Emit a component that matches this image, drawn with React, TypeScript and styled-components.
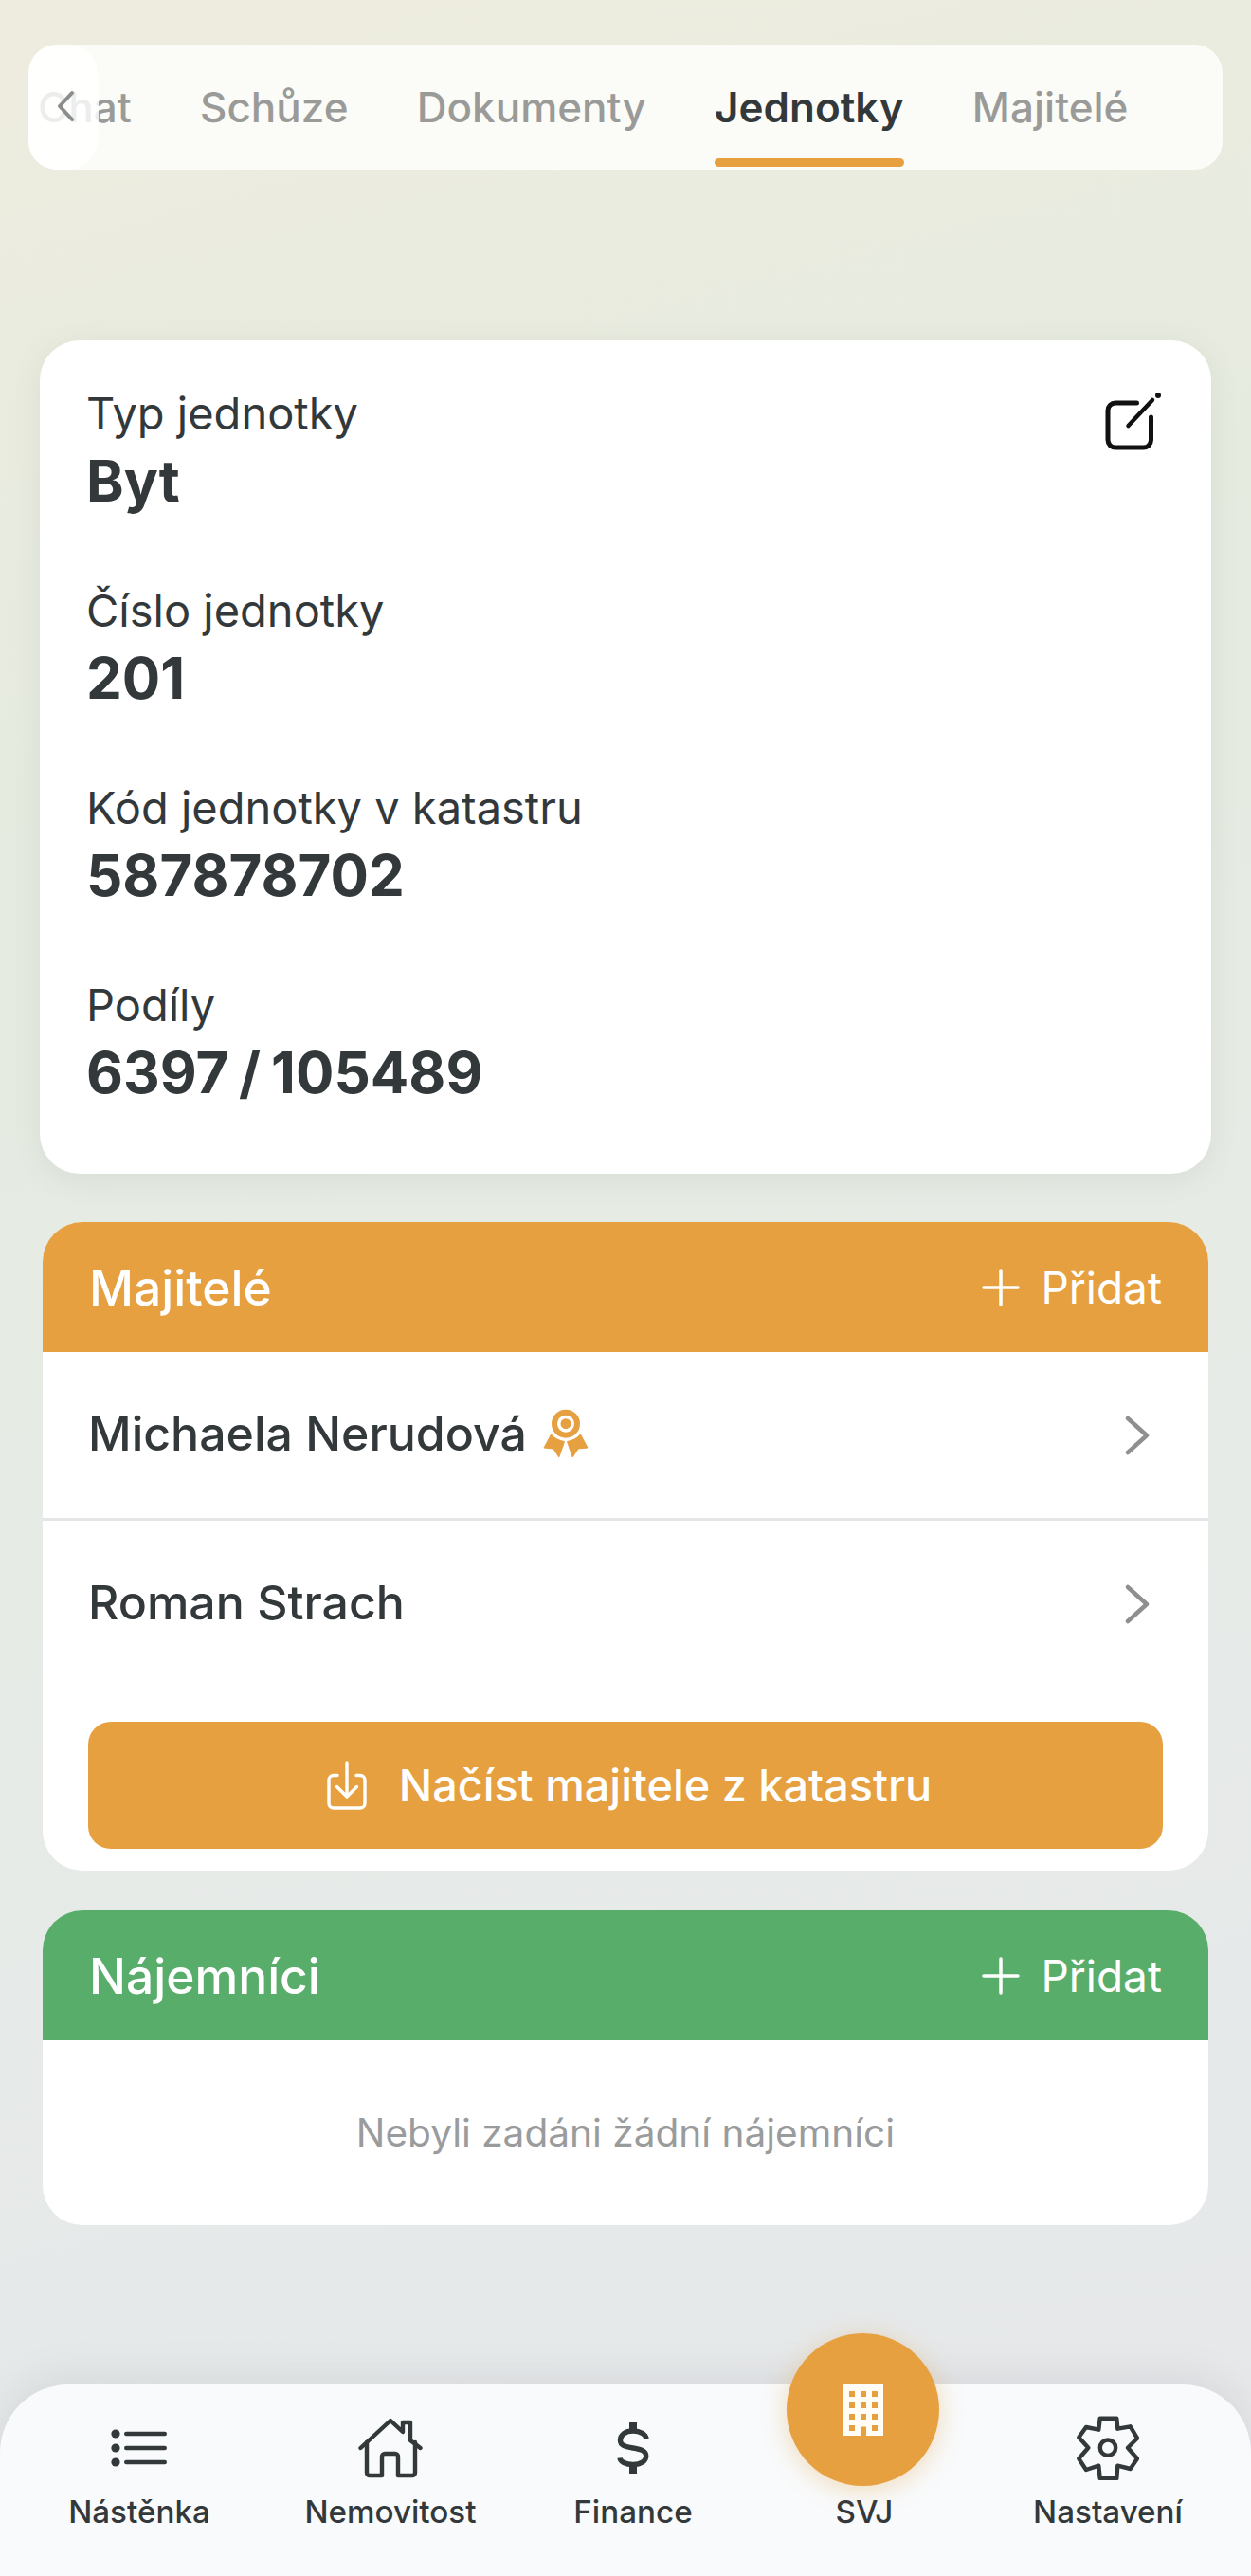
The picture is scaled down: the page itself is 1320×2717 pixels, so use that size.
import React from "react";
import styled, { createGlobalStyle } from "styled-components";

const Global = createGlobalStyle`
  html, body { margin: 0; padding: 0; }
  body { font-family: Inter, "Noto Sans", "Liberation Sans", sans-serif; }
  * { box-sizing: border-box; }
`;

const Page = styled.div`
  width: 1320px;
  height: 2717px;
  overflow: hidden;
  display: flex;
  flex-direction: column;
  padding-top: 47px;
  background: linear-gradient(165deg, #eeecdf 0%, #e5ebe0 30%, #e7ebe7 60%, #e6e9ea 85%, #e7e8eb 100%);
  color: #33383b;
`;

const TabBar = styled.div`
  position: relative;
  height: 132px;
  margin: 0 30px;
  border-radius: 30px;
  background: #fbfcf7;
  overflow: hidden;
  flex: none;
`;

const TabList = styled.div`
  display: flex;
  gap: 72.3px;
  height: 100%;
  padding-left: 10px;
`;

const Tab = styled.div<{ $active?: boolean }>`
  position: relative;
  height: 100%;
  display: flex;
  align-items: center;
  font-size: 44px;
  font-weight: ${(p) => (p.$active ? 600 : 500)};
  color: ${(p) => (p.$active ? "#33383b" : "#9a9b99")};
  ${(p) =>
    p.$active &&
    `&::after {
      content: "";
      position: absolute;
      left: 0;
      right: 0;
      bottom: 3px;
      height: 9px;
      border-radius: 5px;
      background: #e6a040;
    }`}
`;

const BackFade = styled.div`
  position: absolute;
  left: 0;
  top: 0;
  bottom: 0;
  width: 74px;
  border-radius: 30px 30px 30px 30px / 30px 36px 36px 30px;
  background: rgba(255, 255, 255, 0.82);
  display: flex;
  align-items: center;
  padding-left: 29px;
  padding-bottom: 2px;
  color: #8b8c8c;
`;

const InfoCard = styled.section`
  flex: none;
  position: relative;
  height: 879px;
  margin: 180px 42px 0;
  padding: 49px 49px 0;
  border-radius: 42px;
  background: #fff;
  box-shadow: 0 6px 30px rgba(90, 110, 90, 0.1);
  display: flex;
  flex-direction: column;
  gap: 88px;
`;

const EditButton = styled.div`
  position: absolute;
  top: 50px;
  right: 48px;
  width: 64px;
  height: 66px;
  color: #111;
`;

const Field = styled.div`
  display: flex;
  flex-direction: column;
  height: 120px;
`;

const FieldLabel = styled.div`
  font-size: 47px;
  line-height: 56px;
  font-weight: 400;
  color: #33383b;
`;

const FieldValue = styled.div`
  font-size: 60px;
  line-height: 66px;
  margin-top: 10px;
  font-weight: 700;
  word-spacing: -3.5px;
  color: #33383b;
`;

const Panel = styled.section<{ $mt: number; $h: number }>`
  flex: none;
  height: ${(p) => p.$h}px;
  margin: ${(p) => p.$mt}px 45px 0;
  border-radius: 42px;
  background: #fff;
  overflow: hidden;
  display: flex;
  flex-direction: column;
`;

const PanelHeader = styled.div<{ $color: string }>`
  height: 137px;
  flex: none;
  display: flex;
  align-items: center;
  justify-content: space-between;
  padding: 0 49px 0 49px;
  color: #fff;
  background: ${(p) => p.$color};
`;

const PanelTitle = styled.div`
  font-size: 51.5px;
  font-weight: 500;
`;

const AddLink = styled.div`
  display: flex;
  align-items: center;
  gap: 22px;
  font-size: 46px;
  font-weight: 400;
`;

const Row = styled.div<{ $divider?: boolean }>`
  height: ${(p) => (p.$divider ? 178 : 176)}px;
  flex: none;
  display: flex;
  align-items: center;
  justify-content: space-between;
  padding: 0 62px 0 48px;
  border-bottom: ${(p) => (p.$divider ? "3px solid #e4e5e7" : "none")};
`;

const RowName = styled.div`
  display: flex;
  align-items: center;
  gap: 17px;
  font-size: 50px;
  font-weight: 500;
  color: #33383b;
  padding-bottom: 4px;
`;

const ImportButton = styled.div`
  margin: 36px 48px 0;
  height: 134px;
  flex: none;
  border-radius: 24px;
  background: #e6a040;
  color: #fff;
  display: flex;
  align-items: center;
  justify-content: center;
  gap: 34px;
  padding-left: 8px;
  font-size: 46.8px;
  font-weight: 500;
`;

const EmptyText = styled.div`
  flex: 1;
  display: flex;
  align-items: center;
  justify-content: center;
  font-size: 40.6px;
  color: #9a9b9c;
`;

const BottomNav = styled.nav`
  position: relative;
  flex: none;
  margin-top: auto;
  height: 202px;
  padding-top: 32px;
  border-radius: 72px 72px 0 0;
  background: #f8fafb;
  box-shadow: 0 -8px 40px rgba(110, 115, 120, 0.14);
  display: grid;
  grid-template-columns: 294px 236px 276px 212px 302px;
  align-items: start;
`;

const NavItem = styled.div`
  display: flex;
  flex-direction: column;
  align-items: center;
  color: #33383b;
  font-size: 33.2px;
  font-weight: 500;
`;

const NavIconBox = styled.div`
  height: 70px;
  display: flex;
  align-items: center;
  justify-content: center;
  margin-bottom: 12px;
`;

const Fab = styled.div`
  position: absolute;
  left: 830px;
  top: -54px;
  width: 161px;
  height: 161px;
  border-radius: 50%;
  background: #e6a040;
  box-shadow: 0 4px 26px rgba(230, 160, 64, 0.35);
  display: flex;
  align-items: center;
  justify-content: center;
`;

const Plus = () => (
  <svg width="40" height="40" viewBox="0 0 40 40" fill="none" stroke="currentColor" strokeWidth="3.5" strokeLinecap="round">
    <path d="M20 2v36M2 20h36" />
  </svg>
);

const Chevron = () => (
  <svg width="26" height="42" viewBox="0 0 26 42" fill="none" stroke="#8e8f90" strokeWidth="4.5" strokeLinecap="round" strokeLinejoin="round">
    <path d="M3 3l20 18L3 39" />
  </svg>
);

const Ribbon = () => (
  <svg width="48" height="52" viewBox="0 0 48 52">
    <path fillRule="evenodd" fill="#e6a040" d="M24 0.7a15 15 0 1 1 0 30a15 15 0 0 1 0-30zm0 6a9 9 0 1 0 0 18a9 9 0 0 0 0-18zm0 3.5a5.5 5.5 0 1 1 0 11a5.5 5.5 0 0 1 0-11z" />
    <path fill="#e6a040" stroke="#e6a040" strokeWidth="1" strokeLinejoin="round" d="M8.5 27Q14 33 22.5 34.5L16.8 51 11 42 1 41ZM39.5 27Q34 33 25.5 34.5L31.2 51 37 42 47 41Z" />
  </svg>
);

const ImportIcon = () => (
  <svg width="42" height="52" viewBox="0 0 42 52" fill="none" stroke="#fff" strokeWidth="3.4" strokeLinecap="round" strokeLinejoin="round">
    <path d="M11 15.5H7a5 5 0 0 0-5 5V45a5 5 0 0 0 5 5h28a5 5 0 0 0 5-5V20.5a5 5 0 0 0-5-5h-4" />
    <path d="M21 2v36M10.5 27.5L21 38l10.5-10.5" />
  </svg>
);

const EditIcon = () => (
  <svg width="64" height="66" viewBox="0 0 64 66" fill="none" stroke="currentColor" strokeWidth="5" strokeLinecap="round">
    <path d="M33.5 16H11a8 8 0 0 0-8 8v31a8 8 0 0 0 8 8h29.5a8 8 0 0 0 8-8V31" />
    <path d="M24.5 40L50 13" strokeWidth="4.5" />
    <circle cx="56" cy="8" r="3" fill="currentColor" stroke="none" />
  </svg>
);

const ListIcon = () => (
  <svg width="60" height="40" viewBox="0 0 60 40" fill="#33383b">
    <circle cx="5" cy="5" r="4.6" />
    <circle cx="5" cy="20" r="4.6" />
    <circle cx="5" cy="35" r="4.6" />
    <rect x="14" y="2.7" width="45" height="4.6" rx="2.3" />
    <rect x="14" y="17.7" width="45" height="4.6" rx="2.3" />
    <rect x="14" y="32.7" width="45" height="4.6" rx="2.3" />
  </svg>
);

const HouseIcon = () => (
  <svg width="68" height="64" viewBox="0 0 68 64" fill="none" stroke="#33383b" strokeWidth="4.4" strokeLinejoin="round" strokeLinecap="round">
    <path d="M2.5 32L34 3l13 12V5h8v19l10.5 8" />
    <path d="M9 26v32a3 3 0 0 0 3 3h13V41a3 3 0 0 1 3-3h11a3 3 0 0 1 3 3v20h15a3 3 0 0 0 3-3V26" />
  </svg>
);

const DollarIcon = () => (
  <svg width="34" height="56" viewBox="0 0 34 56" fill="#33383b">
    <rect x="13" y="1" width="8" height="10" />
    <rect x="13" y="45" width="8" height="10" />
    <path fill="none" stroke="#33383b" strokeWidth="5.4" d="M31 18.5C30.5 13.5 24.5 10 17 10 9 10 3.5 14 3.5 20 3.5 25 8 26.5 17 28 26 29.5 30.7 31 30.7 36.5 30.7 42 25 45.5 17 45.5 9 45.5 3.5 42.5 3 38.5" />
  </svg>
);

const GearIcon = () => (
  <svg width="66" height="68" viewBox="0 0 66 68" fill="none" stroke="#33383b" strokeWidth="4.4" strokeLinejoin="round">
    <path d="M24.7 2.7H42.3L43.3 13.7 56.7 11.3 64 23.7 54 33.7 64 45.3 56.7 56 43.3 52.7 42.3 66H24.7L23.3 52.7 10 57 2.3 45.3 12.3 33.7 2.3 22.7 10 12 23.3 14.7Z" />
    <circle cx="33" cy="33.7" r="8.2" />
  </svg>
);

const BuildingIcon = () => (
  <svg width="42" height="54" viewBox="0 0 42 54">
    <path
      fill="#fffdf5"
      fillRule="evenodd"
      d="M0 0h42v54H0zM6 7v6h6V7zM18 7v6h6V7zM30 7v6h6V7zM6 19v6h6v-6zM18 19v6h6v-6zM30 19v6h6v-6zM6 31v6h6v-6zM18 31v6h6v-6zM30 31v6h6v-6zM6 43v6h6v-6zM18 44.5V54h6V44.5zM30 43v6h6v-6z"
    />
  </svg>
);

export default function App() {
  return (
    <Page>
      <Global />
      <TabBar>
        <TabList>
          <Tab>Chat</Tab>
          <Tab>Schůze</Tab>
          <Tab>Dokumenty</Tab>
          <Tab $active>Jednotky</Tab>
          <Tab>Majitelé</Tab>
        </TabList>
        <BackFade>
          <svg width="20" height="34" viewBox="0 0 20 34" fill="none" stroke="currentColor" strokeWidth="4" strokeLinecap="round" strokeLinejoin="round">
            <path d="M17 3L4 17l13 14" />
          </svg>
        </BackFade>
      </TabBar>

      <InfoCard>
        <EditButton>
          <EditIcon />
        </EditButton>
        <Field>
          <FieldLabel>Typ jednotky</FieldLabel>
          <FieldValue>Byt</FieldValue>
        </Field>
        <Field>
          <FieldLabel>Číslo jednotky</FieldLabel>
          <FieldValue>201</FieldValue>
        </Field>
        <Field>
          <FieldLabel>Kód jednotky v katastru</FieldLabel>
          <FieldValue>587878702</FieldValue>
        </Field>
        <Field>
          <FieldLabel>Podíly</FieldLabel>
          <FieldValue>6397 / 105489</FieldValue>
        </Field>
      </InfoCard>

      <Panel $mt={51} $h={684}>
        <PanelHeader $color="#e6a040">
          <PanelTitle>Majitelé</PanelTitle>
          <AddLink>
            <Plus />
            Přidat
          </AddLink>
        </PanelHeader>
        <Row $divider>
          <RowName>
            Michaela Nerudová
            <Ribbon />
          </RowName>
          <Chevron />
        </Row>
        <Row>
          <RowName>Roman Strach</RowName>
          <Chevron />
        </Row>
        <ImportButton>
          <ImportIcon />
          Načíst majitele z katastru
        </ImportButton>
      </Panel>

      <Panel $mt={42} $h={332}>
        <PanelHeader $color="#59ad6a">
          <PanelTitle>Nájemníci</PanelTitle>
          <AddLink>
            <Plus />
            Přidat
          </AddLink>
        </PanelHeader>
        <EmptyText>Nebyli zadáni žádní nájemníci</EmptyText>
      </Panel>

      <BottomNav>
        <NavItem>
          <NavIconBox><ListIcon /></NavIconBox>
          Nástěnka
        </NavItem>
        <NavItem>
          <NavIconBox><HouseIcon /></NavIconBox>
          Nemovitost
        </NavItem>
        <NavItem>
          <NavIconBox><DollarIcon /></NavIconBox>
          Finance
        </NavItem>
        <NavItem>
          <NavIconBox />
          SVJ
        </NavItem>
        <NavItem>
          <NavIconBox><GearIcon /></NavIconBox>
          Nastavení
        </NavItem>
        <Fab>
          <BuildingIcon />
        </Fab>
      </BottomNav>
    </Page>
  );
}
